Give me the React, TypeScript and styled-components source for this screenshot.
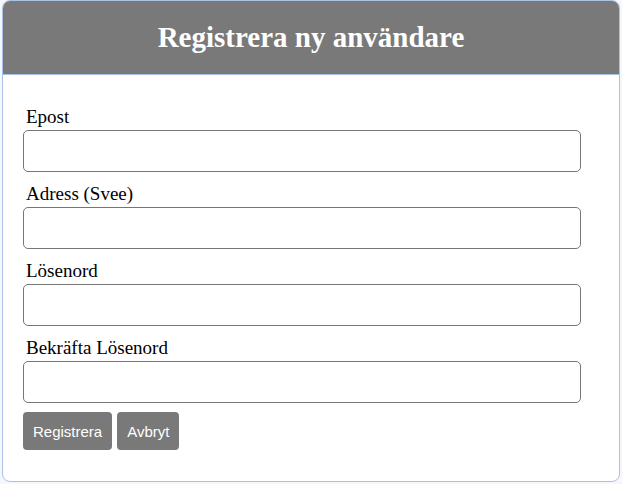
import styled, { createGlobalStyle } from "styled-components";

const GlobalStyle = createGlobalStyle`
  html, body {
    margin: 0;
    padding: 0;
    background: #f5f7fd;
  }
  * {
    box-sizing: border-box;
  }
`;

const Card = styled.div`
  margin: 0 2px;
  width: 618px;
  background: #fff;
  border: 1px solid #a8c2e6;
  border-radius: 8px;
  overflow: hidden;
  font-family: "Liberation Serif", "Times New Roman", serif;
`;

const Header = styled.div`
  height: 74px;
  background: #797979;
  border-bottom: 1px solid #a8c2e6;
  display: flex;
  align-items: center;
  justify-content: center;
`;

const Title = styled.h1`
  margin: 0;
  color: #fff;
  font-family: "Liberation Serif", "Times New Roman", serif;
  font-size: 29px;
  font-weight: bold;
`;

const Form = styled.form`
  padding: 30px 20px 31px 20px;
`;

const Field = styled.div`
  display: flex;
  flex-direction: column;
  margin-bottom: 10px;
`;

const Label = styled.label`
  font-family: "Liberation Serif", "Times New Roman", serif;
  font-size: 19px;
  line-height: 21px;
  color: #000;
  padding: 1px 0 0 3px;
  margin-bottom: 3px;
`;

const Input = styled.input`
  width: 558px;
  height: 42px;
  border: 1px solid #767676;
  border-radius: 5px;
  padding: 0 8px;
  font-size: 16px;
  background: #fff;
`;

const Actions = styled.div`
  display: flex;
  gap: 5px;
  margin-top: -1px;
`;

const Button = styled.button`
  height: 38px;
  padding: 0 10px;
  background: #797979;
  color: #fff;
  border: none;
  border-radius: 4px;
  font-family: "Liberation Sans", Arial, sans-serif;
  font-size: 15px;
  cursor: pointer;
`;

const fields = ["Epost", "Adress (Svee)", "Lösenord", "Bekräfta Lösenord"];

export default function App() {
  return (
    <>
      <GlobalStyle />
      <Card>
        <Header>
          <Title>Registrera ny användare</Title>
        </Header>
        <Form onSubmit={(e) => e.preventDefault()}>
          {fields.map((f) => (
            <Field key={f}>
              <Label>{f}</Label>
              <Input type={f.includes("Lösenord") ? "password" : "text"} />
            </Field>
          ))}
          <Actions>
            <Button type="submit">Registrera</Button>
            <Button type="button">Avbryt</Button>
          </Actions>
        </Form>
      </Card>
    </>
  );
}
